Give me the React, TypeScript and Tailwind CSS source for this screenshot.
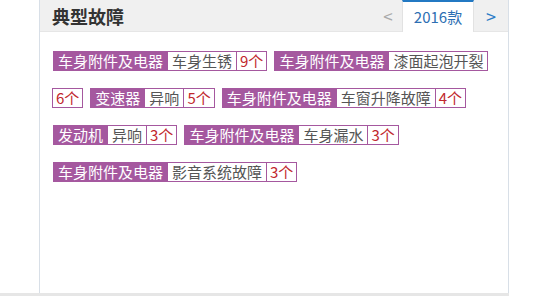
const faults = [
  { cat: "车身附件及电器", name: "车身生锈", count: 9 },
  { cat: "车身附件及电器", name: "漆面起泡开裂", count: 6 },
  { cat: "变速器", name: "异响", count: 5 },
  { cat: "车身附件及电器", name: "车窗升降故障", count: 4 },
  { cat: "发动机", name: "异响", count: 3 },
  { cat: "车身附件及电器", name: "车身漏水", count: 3 },
  { cat: "车身附件及电器", name: "影音系统故障", count: 3 },
];

export default function App() {
  return (
    <div
      className="w-[550px] h-[296px] bg-white relative overflow-hidden"
      style={{ fontFamily: '"Microsoft YaHei", "Noto Sans CJK SC", sans-serif' }}
    >
      <div className="ml-[39px] w-[470px] h-[293px] border-l border-r border-[#d8dfe7] flex flex-col">
        {/* Header */}
        <div className="h-[32px] bg-[#f0f0f0] border-b border-[#e6e6e6] flex items-stretch">
          <h3 className="flex-1 pl-[12px] text-[18px] leading-[32px] font-bold text-[#333]">
            典型故障
          </h3>
          <span className="w-[28px] text-center text-[17px] leading-[32px] text-[#aaa]">&lt;</span>
          <span className="w-[72px] -mb-px bg-white border-t-2 border-t-[#2379c3] border-x border-x-[#e2e2e2] text-center text-[15px] leading-[29px] text-[#2d6fb3]">
            2016款
          </span>
          <span className="w-[34px] text-center text-[18px] leading-[32px] text-[#2a7cc7]">&gt;</span>
        </div>

        {/* Tags */}
        <div className="flex flex-wrap gap-y-[17px] pl-[13px] pr-[10px] pt-[19px] text-[15px] leading-[18px]">
          {faults.map((f, i) => (
            <div key={i} className="contents">
              <span className="h-[20px] px-[4px] bg-[#a5589f] border border-[#a5589f] text-white whitespace-nowrap">
                {f.cat}
              </span>
              <span className="h-[20px] px-[4px] -ml-px bg-white border border-[#a5589f] text-[#555] whitespace-nowrap">
                {f.name}
              </span>
              <span className="h-[20px] px-[3px] -ml-px mr-[7px] bg-white border border-[#a5589f] text-[#c1272d] whitespace-nowrap">
                {f.count}个
              </span>
            </div>
          ))}
        </div>
      </div>
      <div className="h-[3px] w-[509px] bg-[#e6e6e6]" />
    </div>
  );
}
